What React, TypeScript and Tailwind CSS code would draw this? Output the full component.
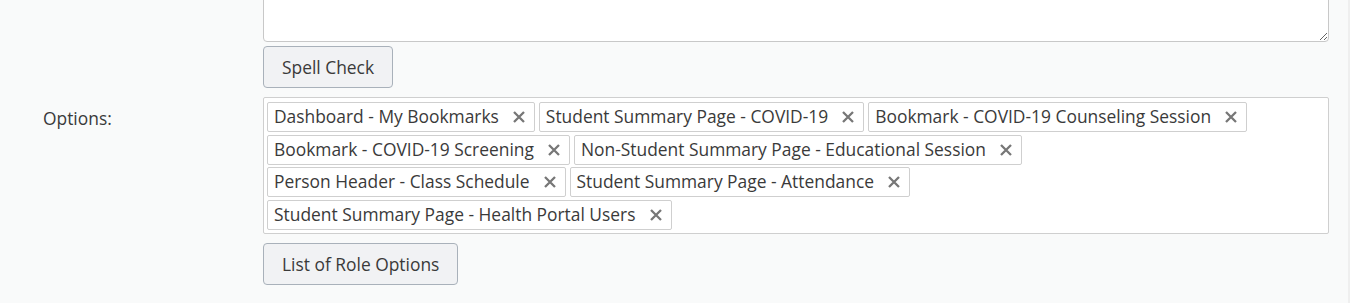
import React from "react";

const tags = [
  "Dashboard - My Bookmarks",
  "Student Summary Page - COVID-19",
  "Bookmark - COVID-19 Counseling Session",
  "Bookmark - COVID-19 Screening",
  "Non-Student Summary Page - Educational Session",
  "Person Header - Class Schedule",
  "Student Summary Page - Attendance",
  "Student Summary Page - Health Portal Users",
];

function Tag({ label }: { label: string }) {
  return (
    <div className="flex h-[30px] items-center rounded-[2px] border border-[#cfcfcf] bg-white pl-[6px] pr-[8px] text-[17.4px] text-[#3a3a3a]">
      <span className="-mt-[1px]">{label}</span>
      <svg className="ml-[13px]" width="14" height="14" viewBox="0 0 14 14">
        <path d="M2 2L12 12M12 2L2 12" stroke="#777" strokeWidth="2.3" strokeLinecap="butt" />
      </svg>
    </div>
  );
}

export default function App() {
  return (
    <div
      className="h-[303px] w-[1350px] overflow-hidden border-r-2 border-[#efefef] bg-[#f9fafa] text-[#3a3a3a]"
      style={{ fontFamily: "'Open Sans', sans-serif" }}
    >
      <div className="flex">
        <div className="w-[263px] shrink-0" />
        <div className="w-[1066px]">
          <textarea className="-mt-[20px] block h-[62px] w-full rounded-[4px] border border-[#c8c8c8] bg-white" />
          <button className="mt-[4px] h-[42px] rounded-[4px] border border-[#a9b1ba] bg-[#f1f2f4] px-[18px] text-[17.4px] text-[#3a3a3a]">
            Spell Check
          </button>
        </div>
      </div>
      <div className="mt-[9px] flex">
        <div className="w-[263px] shrink-0 pl-[43px] pt-[8px] text-[17.4px] text-[#3a3a3a]">
          Options:
        </div>
        <div className="w-[1066px]">
          <div className="flex h-[137px] flex-wrap content-start gap-x-[4px] gap-y-[2.5px] rounded-[2px] border border-[#cfcfcf] bg-white pl-[3px] pr-[20px] pt-[4px]">
            {tags.map((t) => (
              <Tag key={t} label={t} />
            ))}
          </div>
          <button className="mt-[9px] h-[42px] rounded-[4px] border border-[#a9b1ba] bg-[#f1f2f4] px-[18px] text-[17.4px] text-[#3a3a3a]">
            List of Role Options
          </button>
        </div>
      </div>
    </div>
  );
}
